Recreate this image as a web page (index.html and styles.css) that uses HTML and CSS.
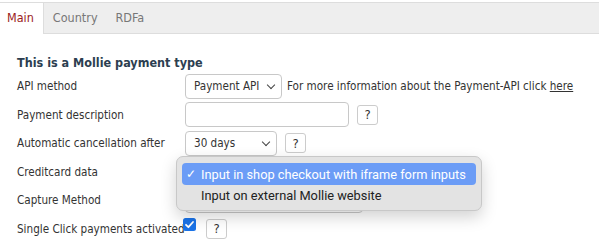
FILE: index.html
```html
<!DOCTYPE html>
<html lang="en">
<head>
    <meta charset="UTF-8">
    <title>Mollie payment type</title>
    <link rel="stylesheet" href="styles.css">
</head>
<body>
    <ul class="tabs">
        <li class="tab active">Main</li>
        <li class="tab">Country</li>
        <li class="tab">RDFa</li>
    </ul>

    <div class="panel">
        <h3>This is a Mollie payment type</h3>
        <div class="form">
            <label>API method</label>
            <div class="field">
                <span class="select w96">Payment API <span class="caret"></span></span>
                <span class="info">For more information about the Payment-API click <a href="#">here</a></span>
            </div>

            <label>Payment description</label>
            <div class="field">
                <span class="input"></span>
                <span class="help">?</span>
            </div>

            <label>Automatic cancellation after</label>
            <div class="field">
                <span class="select w91">30 days <span class="caret"></span></span>
                <span class="help">?</span>
            </div>

            <label>Creditcard data</label>
            <div class="field">
                <span class="select w178"></span>
                <span class="help covered"></span>
            </div>

            <label>Capture Method</label>
            <div class="field">
                <span class="select w178"></span>
                <span class="help covered"></span>
            </div>

            <label>Single Click payments activated</label>
            <div class="field tight">
                <span class="checkbox">
                    <svg width="13" height="13" viewBox="0 0 13 13"><rect width="13" height="13" rx="2.5" fill="#1a73e8"/><path d="M3 6.8l2.4 2.4L10 4" fill="none" stroke="#fff" stroke-width="1.8" stroke-linecap="round" stroke-linejoin="round"/></svg>
                </span>
                <span class="help">?</span>
            </div>
        </div>

        <div class="popup">
            <div class="option selected"><span class="tick">✓</span>Input in shop checkout with iframe form inputs</div>
            <div class="option"><span class="tick"></span>Input on external Mollie website</div>
        </div>
    </div>
</body>
</html>
```
FILE: styles.css
```css
body {
    margin: 0;
    font-family: "DejaVu Sans Condensed", "DejaVu Sans", sans-serif;
    font-size: 11.6px;
    color: #333;
    background: #fff;
}

.tabs {
    list-style: none;
    margin: 2px 0 0;
    padding: 0;
    display: flex;
    height: 30px;
    background: #eee;
    border-top: 1px solid #ddd;
    border-bottom: 1px solid #ddd;
}

.tab {
    padding: 0 9px;
    line-height: 30px;
    color: #777;
    font-size: 12.5px;
}

.tab.active {
    background: #fff;
    color: #9b1c1c;
    border-right: 1px solid #ddd;
    height: 31px;
    padding: 0 9px 0 7px;
}

.panel {
    position: relative;
    padding: 20px 17px 0;
}

h3 {
    margin: 0 0 1px;
    font-size: 12.5px;
    color: #2c3e50;
    line-height: 17px;
}

.form {
    display: grid;
    grid-template-columns: 168px 1fr;
    grid-auto-rows: 28.5px;
    align-items: center;
}

label {
    white-space: nowrap;
}

.field {
    display: flex;
    align-items: center;
    gap: 8px;
    white-space: nowrap;
}

.field.tight {
    gap: 10px;
    margin-left: -2px;
}

.info {
    margin-left: -3px;
}

.select,
.input {
    box-sizing: border-box;
    height: 25px;
    border: 1px solid #c8c8c8;
    border-radius: 4px;
    background: #fff;
    display: flex;
    align-items: center;
    padding: 0 6px 0 8px;
    color: #333;
    position: relative;
}

.w96 { width: 97px; }
.w91 { width: 92px; }
.w178 { width: 178px; }

.input { width: 164px; }

.caret {
    position: absolute;
    right: 7px;
    top: 7px;
    width: 5px;
    height: 5px;
    border-right: 1.5px solid #444;
    border-bottom: 1.5px solid #444;
    transform: rotate(45deg);
}

.info a {
    color: #333;
}

.help {
    box-sizing: border-box;
    width: 21px;
    height: 20px;
    border: 1px solid #ccc;
    border-radius: 3px;
    display: flex;
    align-items: center;
    justify-content: center;
    font-size: 13px;
    color: #333;
    background: #fff;
}

.checkbox {
    display: flex;
    margin-top: -8px;
}

.popup {
    position: absolute;
    left: 176px;
    top: 122px;
    width: 306px;
    box-sizing: border-box;
    padding: 6px 5px 5px;
    background: #e3e3e3;
    border: 1px solid #c8c8c8;
    border-radius: 7px;
    box-shadow: 0 6px 16px rgba(0, 0, 0, 0.18);
    font-family: Roboto, "Noto Sans", sans-serif;
    font-size: 12.8px;
    color: #222;
    white-space: nowrap;
}

.option {
    height: 22px;
    display: flex;
    align-items: center;
    border-radius: 4px;
    padding-left: 4px;
}

.option + .option {
    height: 20px;
}

.option.selected {
    background: #6b9cf6;
    color: #fff;
}

.tick {
    width: 15px;
    font-size: 12px;
}
```
